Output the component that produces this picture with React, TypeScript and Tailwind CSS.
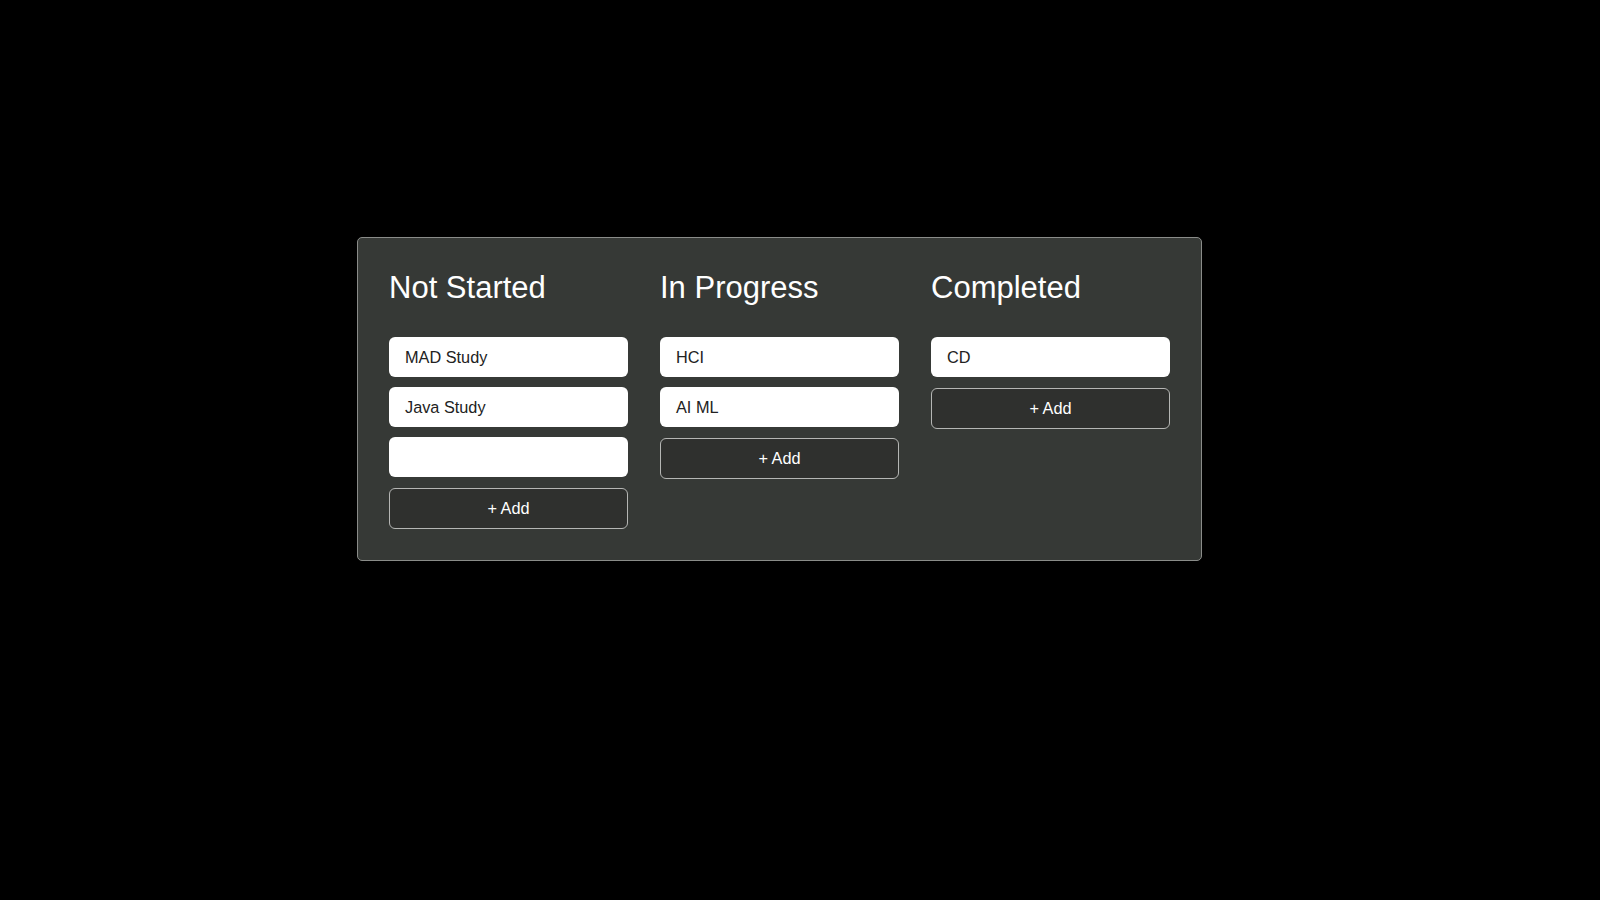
import React from 'react';

const columns = [
  { title: 'Not Started', items: ['MAD Study', 'Java Study', ''] },
  { title: 'In Progress', items: ['HCI', 'AI ML'] },
  { title: 'Completed', items: ['CD'] },
];

export default function App() {
  return (
    <div className="min-h-screen w-full bg-black pt-[237px] pl-[357px]" style={{ fontFamily: '"Liberation Sans", Arial, sans-serif' }}>
      <div className="flex w-[845px] gap-[32px] rounded-[5px] border border-[#8a8c89] bg-[#363936] p-[31px]">
        {columns.map((col) => (
          <div key={col.title} className="flex w-[239px] flex-col">
            <h2 className="mb-[32px] pt-[2px] text-[31px] leading-[34px] text-white">{col.title}</h2>
            <div className="flex flex-col gap-[10px]">
              {col.items.map((item, i) => (
                <div
                  key={i}
                  className="flex h-[40px] items-center rounded-[6px] bg-white px-[16px] text-[16.3px] text-[#222]"
                >
                  {item}
                </div>
              ))}
              <button className="mt-[1px] flex h-[41px] items-center justify-center rounded-[6px] border border-[#b5b6b4] bg-[#2f302e] text-[16.3px] text-white">
                + Add
              </button>
            </div>
          </div>
        ))}
      </div>
    </div>
  );
}
